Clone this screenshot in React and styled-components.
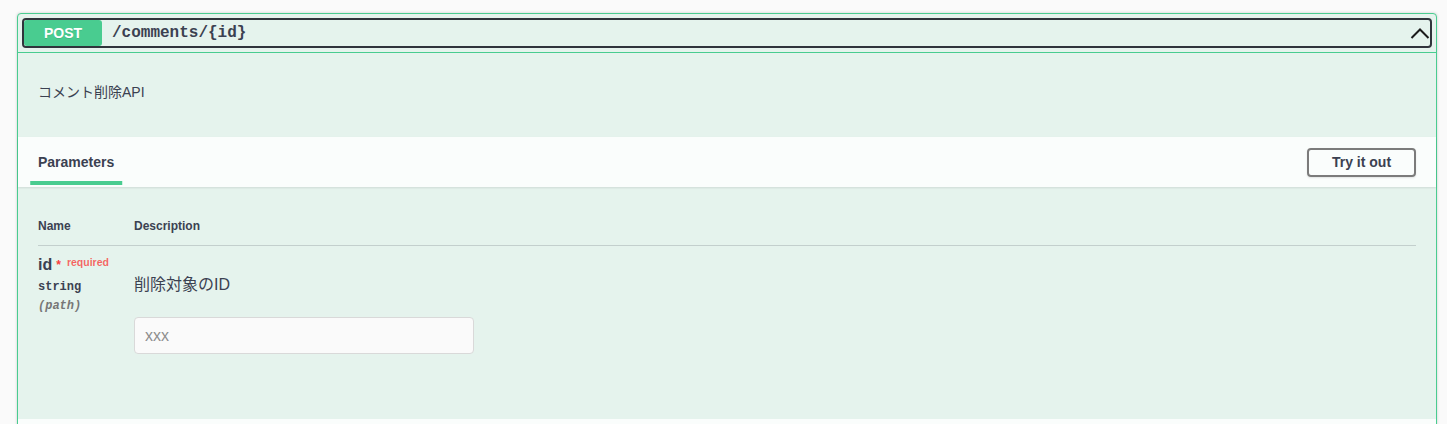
import React from "react";
import styled, { createGlobalStyle } from "styled-components";

const GlobalStyle = createGlobalStyle`
  html, body {
    margin: 0;
    padding: 0;
    overflow: hidden;
    background: #fafafa;
  }
  body {
    font-family: "Liberation Sans", "Noto Sans CJK JP", sans-serif;
    color: #3b4151;
  }
`;

const Page = styled.div`
  padding: 13px 10px 0 17px;
`;

const Opblock = styled.div`
  border: 1px solid #49cc90;
  border-radius: 4px;
  background: #e5f3ed;
  box-shadow: 0 0 3px rgba(0, 0, 0, 0.19);
`;

const Summary = styled.div`
  padding: 4px;
  border-bottom: 1px solid #49cc90;
`;

const SummaryControl = styled.div`
  display: flex;
  align-items: center;
  height: 30px;
  box-sizing: border-box;
  border: 2px solid #30343c;
  border-radius: 4px;
`;

const Method = styled.span`
  display: flex;
  align-items: center;
  justify-content: center;
  width: 78px;
  height: 26px;
  background: #49cc90;
  color: #fff;
  font-size: 14px;
  font-weight: 700;
  border-radius: 3px;
  text-shadow: 0 1px 0 rgba(0, 0, 0, 0.1);
`;

const Path = styled.span`
  flex: 1;
  padding: 0 10px;
  font-family: "Liberation Mono", monospace;
  font-size: 16px;
  font-weight: 700;
  color: #3b4151;
`;

const Arrow = styled.svg`
  width: 20px;
  height: 20px;
  margin-right: 0;
`;

const Description = styled.div`
  padding: 29px 20px 35px;
  font-size: 14px;
  line-height: 20px;
`;

const SectionHeader = styled.div`
  display: flex;
  align-items: center;
  justify-content: space-between;
  height: 50px;
  box-sizing: border-box;
  padding: 0 20px;
  background: rgba(255, 255, 255, 0.8);
  box-shadow: 0 1px 2px rgba(0, 0, 0, 0.1);
`;

const TabTitle = styled.h4`
  position: relative;
  margin: 0;
  font-size: 14px;
  font-weight: 700;
  line-height: 20px;
  color: #3b4151;

  &::after {
    content: "";
    position: absolute;
    left: 50%;
    bottom: -13px;
    width: 120%;
    height: 4px;
    transform: translateX(-50%);
    background: #49cc90;
  }
`;

const TryButton = styled.button`
  height: 29px;
  width: 109px;
  box-sizing: border-box;
  padding: 0;
  border: 2px solid #7b7b7b;
  border-radius: 4px;
  background: transparent;
  box-shadow: 0 1px 2px rgba(0, 0, 0, 0.1);
  font-family: "Liberation Sans", sans-serif;
  font-size: 14px;
  font-weight: 700;
  color: #3b4151;
`;

const TableWrap = styled.div`
  padding: 20px 20px 65px;
`;

const Table = styled.div`
  display: grid;
  grid-template-columns: 96px 1fr;
`;

const HeadCell = styled.div`
  padding: 12px 0 12px;
  font-size: 12px;
  font-weight: 700;
  line-height: 14px;
  border-bottom: 1px solid rgba(59, 65, 81, 0.2);
`;

const NameCell = styled.div`
  padding-top: 10px;
`;

const ParamName = styled.div`
  display: flex;
  align-items: flex-start;
  font-size: 16px;
  font-weight: 700;
  line-height: 18px;
`;

const Star = styled.span`
  margin-left: 4px;
  color: #f93e3e;
  font-size: 12px;
`;

const Required = styled.span`
  margin-left: 6px;
  margin-top: -3px;
  color: rgba(255, 0, 0, 0.6);
  font-size: 10.5px;
  font-weight: 700;
`;

const Mono = styled.div`
  font-family: "Liberation Mono", monospace;
  font-size: 12px;
  font-weight: 700;
  line-height: 14px;
  color: ${(p) => (p.$muted ? "#777" : "#3b4151")};
  font-style: ${(p) => (p.$muted ? "italic" : "normal")};
  margin-top: ${(p) => p.$top}px;
`;

const DescCell = styled.div`
  padding-top: 10px;
`;

const DescText = styled.p`
  margin: 19px 0 22px;
  font-size: 16px;
  line-height: 20px;
  color: #3b4151;
`;

const Input = styled.input`
  display: block;
  width: 340px;
  height: 37px;
  box-sizing: border-box;
  padding: 8px 10px;
  border: 1px solid #d9d9d9;
  border-radius: 4px;
  background: #fafafa;
  font-family: "Liberation Sans", sans-serif;
  font-size: 16px;
  color: #3b4151;
  outline: none;

  &::placeholder {
    color: #8e8e8e;
  }
`;

const ResponsesHeader = styled(SectionHeader)`
  box-shadow: none;
`;

export default function App() {
  return (
    <>
      <GlobalStyle />
      <Page>
        <Opblock>
          <Summary>
            <SummaryControl>
              <Method>POST</Method>
              <Path>/comments/{"{id}"}</Path>
              <Arrow viewBox="0 0 20 20">
                <polyline
                  points="1.5,15 10,6.5 18.5,15"
                  fill="none"
                  stroke="#1b1b1b"
                  strokeWidth="2"
                />
              </Arrow>
            </SummaryControl>
          </Summary>
          <Description>コメント削除API</Description>
          <SectionHeader>
            <TabTitle>Parameters</TabTitle>
            <TryButton>Try it out</TryButton>
          </SectionHeader>
          <TableWrap>
            <Table>
              <HeadCell>Name</HeadCell>
              <HeadCell>Description</HeadCell>
              <NameCell>
                <ParamName>
                  id<Star>*</Star>
                  <Required>required</Required>
                </ParamName>
                <Mono $top={6}>string</Mono>
                <Mono $top={5} $muted>
                  (path)
                </Mono>
              </NameCell>
              <DescCell>
                <DescText>削除対象のID</DescText>
                <Input placeholder="xxx" />
              </DescCell>
            </Table>
          </TableWrap>
          <ResponsesHeader />
        </Opblock>
      </Page>
    </>
  );
}
